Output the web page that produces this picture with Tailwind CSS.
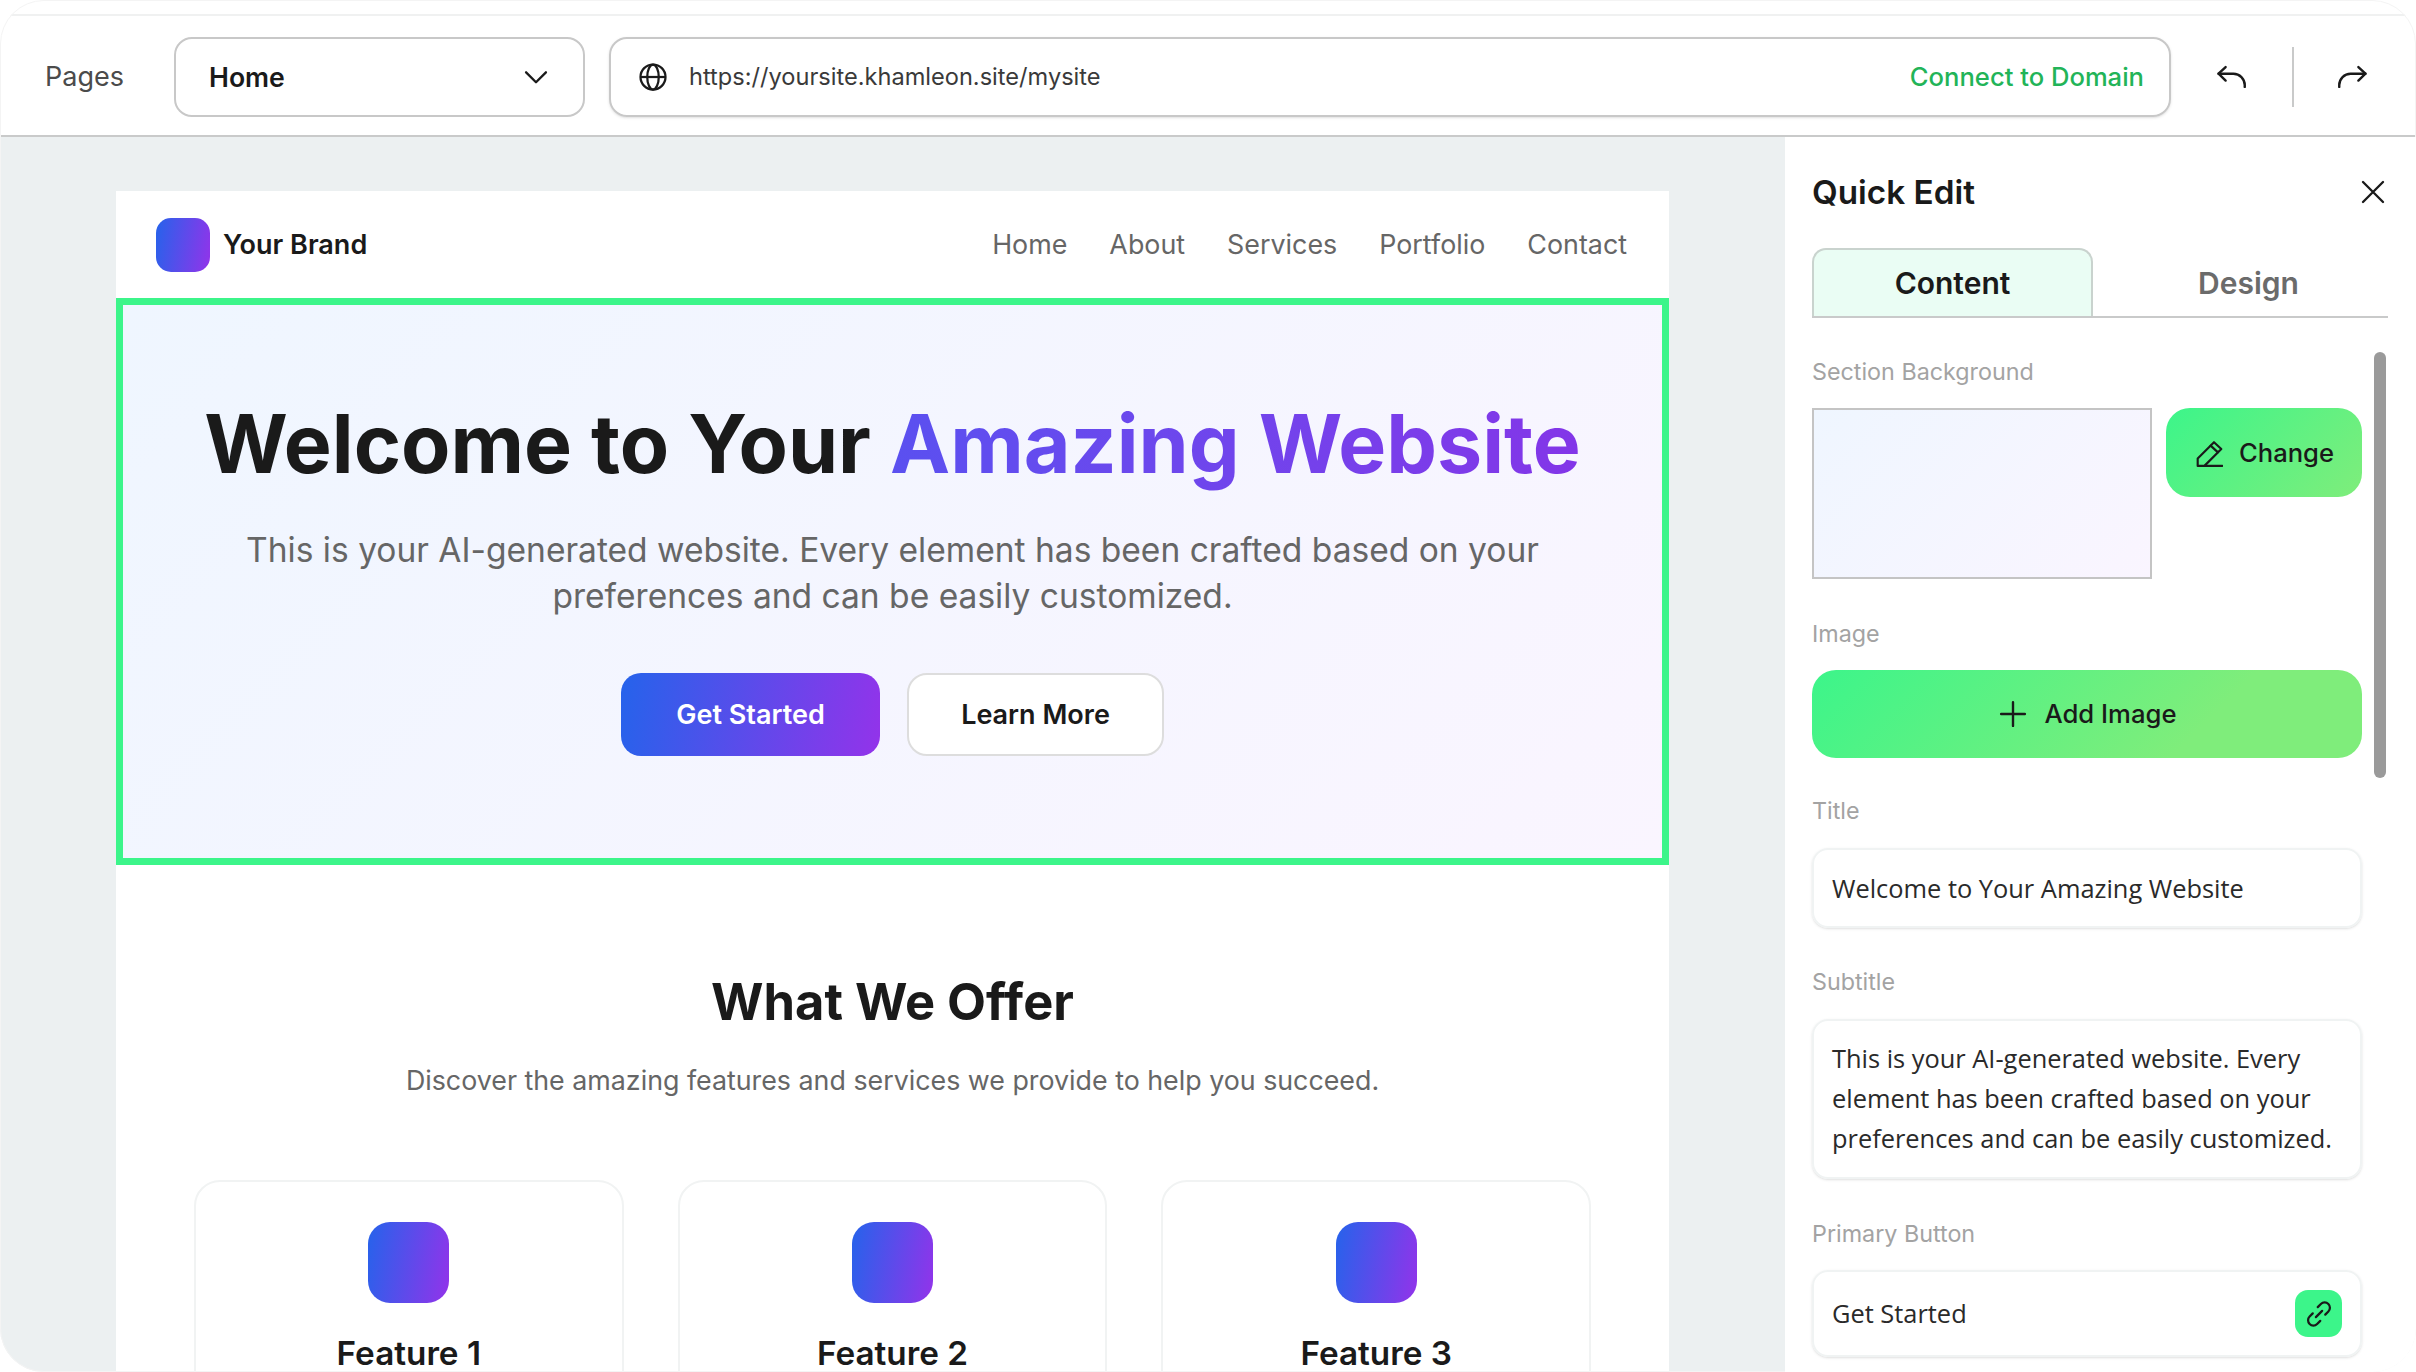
<!DOCTYPE html>
<html lang="en">
  <head>
    <meta charset="UTF-8" />
    <script src="https://cdn.jsdelivr.net/npm/@tailwindcss/browser@4"></script>
    <title>Quick Edit</title>
  </head>
  <body class="bg-white font-['Inter',sans-serif] text-[#1a1a1a]">
    <div class="h-[1372px] w-[2416px] overflow-hidden rounded-[44px] outline-1 -outline-offset-1 outline-[#f4f4f4] flex flex-col">
      <div class="h-[16px] shrink-0 border-b-2 border-[#f0f1f1]"></div>

      <!-- toolbar -->
      <header class="h-[121px] shrink-0 flex items-center border-b-2 border-[#c9caca] pl-[45px] pt-[2px] bg-white">
        <span class="mt-[2px] text-[27px] text-[#4b4b4b] w-[129px]">Pages</span>
        <div class="w-[411px] h-[80px] rounded-[18px] border-2 border-[#c8c8c8] flex items-center justify-between pl-[33px] pr-[33px]">
          <span class="text-[26.67px] font-semibold">Home</span>
          <svg class="w-[28px] h-[28px]" viewBox="0 0 24 24" fill="none" stroke="#1a1a1a" stroke-width="2" stroke-linecap="round" stroke-linejoin="round"><path d="M3.5 8 12 16.5 20.5 8" /></svg>
        </div>
        <div class="ml-[24px] w-[1562px] h-[80px] rounded-[18px] border-2 border-[#c8c8c8] shadow-sm flex items-center pl-[27px] pr-[25px]">
          <svg class="w-[30px] h-[30px] shrink-0" viewBox="0 0 24 24" fill="none" stroke="#1a1a1a" stroke-width="1.8"><circle cx="12" cy="12" r="10" /><ellipse cx="12" cy="12" rx="4.6" ry="10" /><path d="M2 12h20" /></svg>
          <span class="ml-[21px] text-[23.6px] text-[#3a3a3a]">https://yoursite.khamleon.site/mysite</span>
          <span class="mt-[2px] ml-auto text-[25.6px] font-medium text-[#22b458]">Connect to Domain</span>
        </div>
        <svg class="ml-[44px] w-[34px] h-[34px]" viewBox="0 0 24 24" fill="none" stroke="#1a1a1a" stroke-width="1.7" stroke-linecap="round" stroke-linejoin="round"><path d="M7.5 5 2.5 9.7 7.5 14.5" /><path d="M2.5 9.7H13a8 8 0 0 1 8 8V19" /></svg>
        <div class="ml-[43px] w-[2px] h-[60px] bg-[#c9caca]"></div>
        <svg class="ml-[41px] w-[34px] h-[34px]" viewBox="0 0 24 24" fill="none" stroke="#1a1a1a" stroke-width="1.7" stroke-linecap="round" stroke-linejoin="round"><path d="M16.5 5 21.5 9.7 16.5 14.5" /><path d="M21.5 9.7H11a8 8 0 0 0-8 8V19" /></svg>
      </header>

      <div class="flex-1 min-h-0 flex">
        <!-- canvas -->
        <main class="w-[1785px] shrink-0 bg-[#ecf0f1] pt-[54px] px-[116px] overflow-hidden">
          <div class="bg-white h-[1300px]">
            <nav class="h-[107px] flex items-center justify-between pl-[40px] pr-[42px]">
              <div class="flex items-center gap-[13px]">
                <div class="w-[54px] h-[54px] rounded-[15px] bg-[linear-gradient(100deg,#2563eb,#9333ea)]"></div>
                <span class="mt-[2px] text-[27px] font-semibold">Your Brand</span>
              </div>
              <div class="flex gap-[42px] text-[26.85px] text-[#666666]">
                <span>Home</span><span>About</span><span>Services</span><span>Portfolio</span><span>Contact</span>
              </div>
            </nav>

            <section class="h-[567px] border-[7px] border-[#3cf58a] bg-[linear-gradient(135deg,#eff6ff,#faf5ff)] flex flex-col items-center pt-[91px]">
              <h1 class="text-[80.6px] leading-[96px] font-bold whitespace-nowrap">
                Welcome to Your
                <span class="bg-gradient-to-r from-[#5a50f0] to-[#8335e8] bg-clip-text text-transparent">Amazing Website</span>
              </h1>
              <p class="mt-[35px] w-[1340px] text-center text-[33.55px] leading-[46px] text-[#666666]">
                This is your AI-generated website. Every element has been crafted based on your preferences and can be easily customized.
              </p>
              <div class="mt-[54px] flex gap-[27px]">
                <button class="w-[259px] h-[83px] pt-[2px] rounded-[20px] bg-[linear-gradient(100deg,#2563eb,#9333ea)] text-white text-[27px] font-semibold">Get Started</button>
                <button class="w-[257px] h-[83px] pt-[2px] rounded-[20px] bg-white border-2 border-[#dddddd] text-[27px] font-semibold">Learn More</button>
              </div>
            </section>

            <section class="pt-[107px] px-[78px]">
              <h2 class="text-center text-[50.6px] leading-[60px] font-bold">What We Offer</h2>
              <p class="mt-[30px] text-center text-[26.8px] leading-[36px] text-[#666666]">Discover the amazing features and services we provide to help you succeed.</p>
              <div class="mt-[82px] grid grid-cols-3 gap-[54px]">
                <div class="h-[300px] rounded-[26px] border-2 border-[#f1f3f3] flex flex-col items-center pt-[40px]">
                  <div class="w-[81px] h-[81px] rounded-[22px] bg-[linear-gradient(100deg,#2563eb,#9333ea)]"></div>
                  <h3 class="mt-[32px] text-[33.3px] leading-[36px] font-semibold">Feature 1</h3>
                </div>
                <div class="h-[300px] rounded-[26px] border-2 border-[#f1f3f3] flex flex-col items-center pt-[40px]">
                  <div class="w-[81px] h-[81px] rounded-[22px] bg-[linear-gradient(100deg,#2563eb,#9333ea)]"></div>
                  <h3 class="mt-[32px] text-[33.3px] leading-[36px] font-semibold">Feature 2</h3>
                </div>
                <div class="h-[300px] rounded-[26px] border-2 border-[#f1f3f3] flex flex-col items-center pt-[40px]">
                  <div class="w-[81px] h-[81px] rounded-[22px] bg-[linear-gradient(100deg,#2563eb,#9333ea)]"></div>
                  <h3 class="mt-[32px] text-[33.3px] leading-[36px] font-semibold">Feature 3</h3>
                </div>
              </div>
            </section>
          </div>
        </main>

        <!-- quick edit panel -->
        <aside class="relative flex-1 min-w-0 bg-white pl-[27px] overflow-hidden">
          <div class="flex items-center justify-between h-[110px] pr-[28px]">
            <h2 class="mt-[2px] text-[33.3px] font-semibold">Quick Edit</h2>
            <svg class="w-[30px] h-[30px]" viewBox="0 0 24 24" fill="none" stroke="#1a1a1a" stroke-width="1.9" stroke-linecap="round"><path d="M4 4l16 16M20 4 4 20" /></svg>
          </div>
          <div class="flex w-[576px] h-[70px] border-b-2 border-[#c9caca] mt-[1px]">
            <div class="w-[281px] pt-[1px] rounded-t-[14px] border-2 border-b-0 border-[#c9d3ce] bg-[#eafdf4] flex items-center justify-center text-[30px] font-semibold">Content</div>
            <div class="flex-1 pl-[16px] pt-[2px] flex items-center justify-center text-[30px] font-semibold text-[#6b6b6b]">Design</div>
          </div>

          <div class="w-[550px]">
            <p class="mt-[39px] text-[23.3px] leading-[30px] text-[#a3a3a3]">Section Background</p>
            <div class="mt-[21px] flex gap-[14px] items-start">
              <div class="w-[340px] h-[171px] border-2 border-[#c4c4c4] bg-[linear-gradient(135deg,#eff6ff,#faf5ff)]"></div>
              <button class="w-[196px] h-[89px] pl-[2px] pt-[1px] rounded-[24px] bg-[linear-gradient(135deg,#3cf58a,#7fed7b)] flex items-center justify-center gap-[16px] text-[25.6px] font-medium">
                <svg class="w-[27px] h-[27px]" viewBox="0 0 24 24" fill="none" stroke="#1a1a1a" stroke-width="1.9" stroke-linecap="round" stroke-linejoin="round"><path d="M1.5 16.5 16 2l6.5 6-15 15H1.5z" /><path d="M13 5l6.5 6" /><path d="M8 23h15.5" /></svg>
                Change
              </button>
            </div>
            <p class="mt-[40px] text-[23.3px] leading-[30px] text-[#a3a3a3]">Image</p>
            <button class="mt-[21px] w-full h-[88px] pl-[1px] rounded-[24px] bg-[linear-gradient(135deg,#3cf58a,#7fed7b_70%)] flex items-center justify-center gap-[16px] text-[25.7px] font-medium">
              <svg class="w-[30px] h-[30px]" viewBox="0 0 24 24" fill="none" stroke="#1a1a1a" stroke-width="1.9" stroke-linecap="round"><path d="M12 2.5v19M2.5 12h19" /></svg>
              Add Image
            </button>
            <p class="mt-[38px] text-[23.3px] leading-[30px] text-[#a3a3a3]">Title</p>
            <div class="mt-[22px] h-[80px] rounded-[16px] border-2 border-[#f0f3f3] shadow-sm flex items-center pl-[18px] pr-[10px] font-['Open_Sans',sans-serif] text-[25.4px] text-[#2a2a2a]">Welcome to Your Amazing Website</div>
            <p class="mt-[39px] text-[23.3px] leading-[30px] text-[#a3a3a3]">Subtitle</p>
            <div class="mt-[22px] h-[160px] rounded-[16px] border-2 border-[#f0f3f3] shadow-sm py-[17px] pl-[18px] pr-[10px] font-['Open_Sans',sans-serif] text-[25.4px] leading-[40px] text-[#2a2a2a]">This is your AI-generated website. Every element has been crafted based on your preferences and can be easily customized.</div>
            <p class="mt-[40px] text-[23.3px] leading-[30px] text-[#a3a3a3]">Primary Button</p>
            <div class="mt-[21px] h-[87px] rounded-[16px] border-2 border-[#f0f3f3] shadow-sm flex items-center justify-between pl-[18px] pr-[18px] font-['Open_Sans',sans-serif] text-[25.4px] text-[#2a2a2a]">
              Get Started
              <div class="w-[47px] h-[47px] rounded-[13px] bg-[#3cf58a] flex items-center justify-center">
                <svg class="w-[30px] h-[30px]" viewBox="0 0 24 24" fill="none" stroke="#1a1a1a" stroke-width="1.8" stroke-linecap="round" stroke-linejoin="round"><path d="M11 6.5l2.5-2.5a4.2 4.2 0 0 1 6 6L17 12.5" /><path d="M13 17.5 10.5 20a4.2 4.2 0 0 1-6-6L7 11.5" /><path d="M9.5 14.5 14.5 9.5" /></svg>
              </div>
            </div>
          </div>

          <div class="absolute left-[589px] top-[215px] w-[12px] h-[426px] rounded-full bg-[#9a9a9a]"></div>
        </aside>
      </div>
    </div>
  </body>
</html>
